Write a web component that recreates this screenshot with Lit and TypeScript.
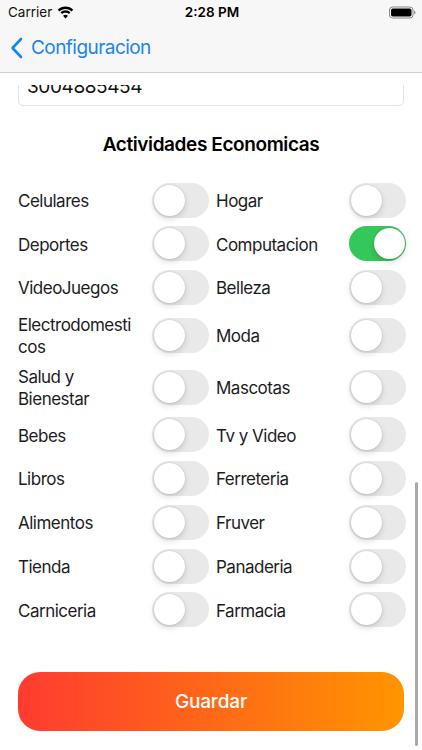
import { LitElement, html, css } from "lit";
import { customElement, state } from "lit/decorators.js";

const ITEMS: [string, string][] = [
  ["Celulares", "Hogar"],
  ["Deportes", "Computacion"],
  ["VideoJuegos", "Belleza"],
  ["Electrodomesticos", "Moda"],
  ["Salud y Bienestar", "Mascotas"],
  ["Bebes", "Tv y Video"],
  ["Libros", "Ferreteria"],
  ["Alimentos", "Fruver"],
  ["Tienda", "Panaderia"],
  ["Carniceria", "Farmacia"],
];

@customElement("app-root")
export class AppRoot extends LitElement {
  @state() on: Record<string, boolean> = { Computacion: true };

  static styles = css`
    :host {
      display: block;
      width: 422px;
      height: 750px;
      position: relative;
      overflow: hidden;
      background: #fff;
      font-family: Inter, "Liberation Sans", sans-serif;
      color: #000;
    }
    .app { display: flex; flex-direction: column; height: 750px; }
    .top {
      flex: none;
      height: 73px;
      box-sizing: border-box;
      background: #f7f7f7;
      border-bottom: 1px solid #d0d0d2;
    }
    .status {
      height: 24px;
      display: grid;
      grid-template-columns: 1fr auto 1fr;
      align-items: center;
      padding: 0 6px 0 8px;
      font-size: 13.5px;
    }
    .carrier { display: flex; align-items: center; gap: 5px; color: #111; }
    .time { font-weight: 600; }
    .batt { justify-self: end; display: block; }
    .nav {
      height: 47px;
      display: flex;
      align-items: center;
      gap: 8px;
      padding-left: 10px;
      color: #1a84f0;
      font-size: 19px;
      letter-spacing: -0.55px;
    }
    .clip {
      flex: 1;
      margin-top: 12px;
      overflow: hidden;
      padding: 0 18px;
    }
    .field {
      height: 66px;
      margin-top: -45.5px;
      box-sizing: border-box;
      border: 1px solid #e3e3e5;
      border-radius: 5px;
      display: flex;
      align-items: flex-end;
      padding: 0 8px 7px;
      font-size: 19px;
      letter-spacing: -0.4px;
      color: #111;
    }
    h2 {
      margin: 27px 0 26px;
      font-size: 19px;
      line-height: 24px;
      font-weight: 600;
      letter-spacing: -0.4px;
      text-align: center;
    }
    .grid {
      display: grid;
      grid-template-columns: 134px 57px 140px 57px;
      row-gap: 8.75px;
      align-items: center;
      margin-right: -2px;
    }
    .label {
      padding: 2px 12px 0 0;
      font-size: 17px;
      line-height: 22.5px;
      letter-spacing: -0.5px;
      color: #1c1c1e;
      word-break: break-all;
    }
    .label.double { margin: -2px 0; }
    .label.right { padding: 2px 0 0 7px; }
    .sw {
      width: 57px;
      height: 35px;
      padding: 0;
      border: 0;
      border-radius: 18px;
      background: #e9e9ea;
      display: flex;
      align-items: center;
      cursor: pointer;
    }
    .sw.on { background: #34c759; justify-content: flex-end; }
    .knob {
      width: 31px;
      height: 31px;
      margin: 2px 1.5px;
      border-radius: 50%;
      background: #fff;
      box-shadow: 0 3px 6px rgba(0, 0, 0, 0.14), 0 0 1.5px rgba(0, 0, 0, 0.2);
    }
    .save {
      display: block;
      width: 100%;
      height: 59px;
      margin-top: 45px;
      border: 0;
      border-radius: 22px;
      background: linear-gradient(90deg, #ff3b30, #ff9500);
      color: #fff;
      font: 500 19px Inter, "Liberation Sans", sans-serif;
      letter-spacing: -0.15px;
    }
    .scrollbar {
      position: absolute;
      left: 415px;
      top: 482px;
      width: 3px;
      height: 264px;
      border-radius: 2px;
      background: #a9a9ab;
    }
  `;

  private sw(name: string) {
    const v = !!this.on[name];
    return html`<button
      class="sw ${v ? "on" : ""}"
      role="switch"
      aria-label=${name}
      aria-checked=${v}
      @click=${() => (this.on = { ...this.on, [name]: !v })}
    ><span class="knob"></span></button>`;
  }

  render() {
    return html`
      <div class="app">
        <header class="top">
          <div class="status">
            <div class="carrier">
              Carrier
              <svg width="17" height="13" viewBox="0 0 17 13" fill="#000">
                <path d="M8.500 3c2.400 0 4.500.9 6.100 2.500l1.600-1.700C14.200 1.800 11.500.6 8.500.6S2.800 1.800.8 3.800l1.600 1.700C4 3.900 6.100 3 8.500 3z"/>
                <path d="M8.500 6.700c1.300 0 2.500.5 3.400 1.400l1.600-1.700C12.200 5.100 10.400 4.300 8.500 4.300s-3.700.8-5 2.100l1.600 1.700c.9-.9 2.100-1.400 3.400-1.400z"/>
                <path d="M8.500 12.400l2.500-2.700c-.7-.6-1.600-1-2.500-1s-1.800.4-2.500 1z"/>
              </svg>
            </div>
            <div class="time">2:28 PM</div>
            <svg class="batt" width="27" height="13" viewBox="0 0 27 13">
              <rect x=".5" y="1" width="23.500" height="11" rx="3" fill="none" stroke="#888" />
              <rect x="2" y="2.500" width="20.500" height="8" rx="1.800" fill="#000" />
              <path d="M25 4.500c1 .3 1.500 1 1.500 2s-.5 1.700-1.500 2z" fill="#999" />
            </svg>
          </div>
          <nav class="nav">
            <svg width="13" height="22" viewBox="0 0 13 22" fill="none" stroke="#1a84f0" stroke-width="2.600" stroke-linecap="round" stroke-linejoin="round">
              <path d="M11 2 2.500 11l8.500 9" />
            </svg>
            Configuracion
          </nav>
        </header>
        <main class="clip">
          <div class="field">3004885454</div>
          <h2>Actividades Economicas</h2>
          <div class="grid">
            ${ITEMS.map(
              ([a, b]) => html`
                <div class="label ${a.length > 12 ? "double" : ""}">${a === "Salud y Bienestar" ? html`Salud y<br />Bienestar` : a}</div>
                ${this.sw(a)}
                <div class="label right">${b}</div>
                ${this.sw(b)}
              `
            )}
          </div>
          <button class="save">Guardar</button>
        </main>
      </div>
      <div class="scrollbar"></div>
    `;
  }
}
